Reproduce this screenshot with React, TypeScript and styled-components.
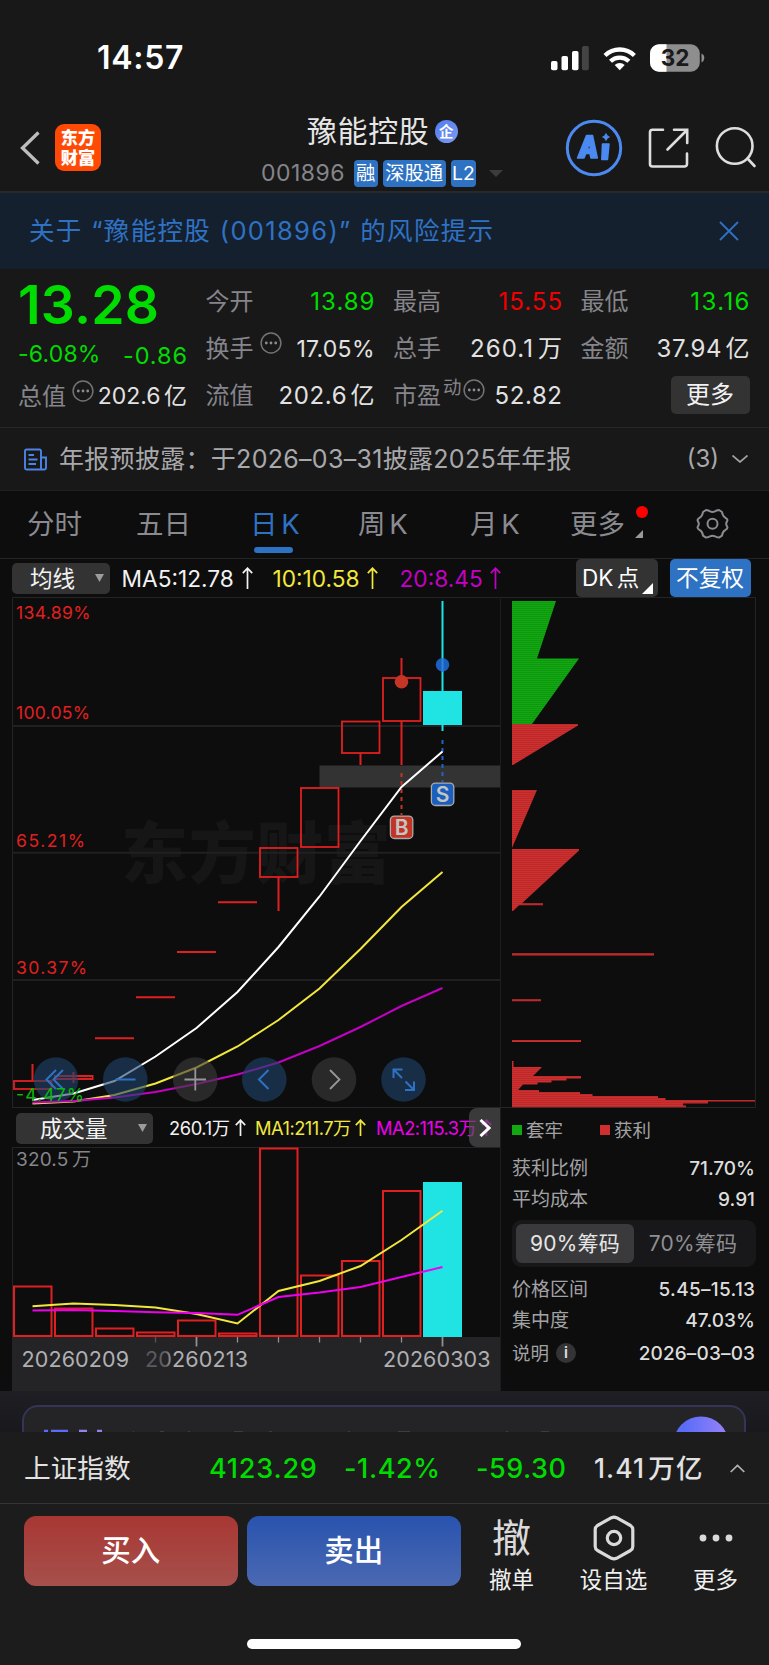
import React from "react";
import styled, { createGlobalStyle, css } from "styled-components";

const GREEN = "#00dc00";
const RED = "#e02020";
const BLUE = "#2e72c3";
const LINE = "#242426";

const Global = createGlobalStyle`
  * { box-sizing: border-box; }
  body {
    margin: 0;
    background: #0d0d0d;
    font-family: Inter, "Noto Sans CJK SC", sans-serif;
    font-size: 24px;
    color: #e2e2e2;
    -webkit-font-smoothing: antialiased;
  }
  svg { display: block; flex: none; }
  svg text { font-family: Inter, "Noto Sans CJK SC", sans-serif; }
`;

const Page = styled.div`
  width: 769px;
  height: 1665px;
  overflow: hidden;
  display: flex;
  flex-direction: column;
  white-space: nowrap;
  & > * { flex: none; }
`;

type TxtProps = { $size?: number; $color?: string; $weight?: number; $ls?: number; $ml?: number; $dy?: number; $ws?: number };
const Txt = styled.span<TxtProps>`
  flex: none;
  line-height: 1;
  font-size: ${(p) => p.$size ?? 24}px;
  color: ${(p) => p.$color ?? "inherit"};
  font-weight: ${(p) => p.$weight ?? 400};
  letter-spacing: ${(p) => p.$ls ?? 0}px;
  word-spacing: ${(p) => p.$ws ?? 0}px;
  margin-left: ${(p) => p.$ml ?? 0}px;
  margin-right: ${(p) => -(p.$ls ?? 0)}px;
  ${(p) => p.$dy && css`transform: translateY(${p.$dy}px);`}
`;

/* ---------- status bar ---------- */
const StatusBar = styled.div`
  height: 105px;
  background: #181818;
  display: flex;
  align-items: center;
  padding: 10px 64px 0 97px;
`;
const StatusIcons = styled.div`
  margin-left: auto;
  display: flex;
  align-items: center;
`;

/* ---------- header ---------- */
const Header = styled.header`
  height: 88px;
  background: #181818;
  border-bottom: 2px solid #29292b;
  display: flex;
  padding-left: 20px;
`;
const Logo = styled.div`
  width: 46px;
  height: 47px;
  margin: 19px 0 0 14px;
  border-radius: 9px;
  background: #ff4a05;
  color: #fff;
  font: 900 17.2px/20px Inter, "Noto Sans CJK SC", sans-serif;
  text-align: center;
  padding-top: 3.5px;
`;
const TitleBlock = styled.div`
  width: 260px;
  margin-left: 160px;
  padding-top: 9px;
`;
const TitleRow = styled.div`
  height: 34px;
  display: flex;
  align-items: center;
  padding-left: 46px;
`;
const CodeRow = styled.div`
  height: 28px;
  margin-top: 11px;
  display: flex;
  align-items: center;
`;
const Verified = styled.span`
  width: 23px;
  height: 23px;
  margin-left: 6px;
  border-radius: 50%;
  background: linear-gradient(135deg, #4f7cf0, #7d9bf2);
  color: #fff;
  font: 700 14.5px/22px "Noto Sans CJK SC", sans-serif;
  text-align: center;
`;
const Tag = styled.span<{ $w: number; $ml: number }>`
  width: ${(p) => p.$w}px;
  height: 27px;
  margin-left: ${(p) => p.$ml}px;
  border-radius: 4px;
  background: ${BLUE};
  color: #fff;
  font-size: 19.3px;
  line-height: 27px;
  text-align: center;
`;

const Banner = styled.div`
  height: 76px;
  background: #15202f;
  color: #2f72c4;
  display: flex;
  align-items: center;
  padding: 0 30px 0 29px;
  & > svg { margin-left: auto; }
`;

/* ---------- quote ---------- */
const Quote = styled.section`
  height: 159px;
  background: #181818;
  border-bottom: 1px solid #272728;
  display: grid;
  grid-template-columns: repeat(4, 169px);
  column-gap: 18.5px;
  padding: 9px 0 0 18px;
`;
const QuoteCol = styled.div`
  display: flex;
  flex-direction: column;
`;
const Cell = styled.div<{ $h?: number }>`
  height: ${(p) => p.$h ?? 47}px;
  display: flex;
  align-items: center;
  & > :last-child { margin-left: auto; }
`;
const MoreButton = styled.span`
  width: 79px;
  height: 38px;
  border-radius: 5px;
  background: #333334;
  color: #f2f2f2;
  font-size: 24px;
  line-height: 37px;
  text-align: center;
`;

const Notice = styled.div`
  height: 63px;
  background: #181818;
  border-bottom: 1px solid #202022;
  color: #a9a9ac;
  display: flex;
  align-items: center;
  padding: 0 21px 0 24px;
  & > svg:last-child { margin-left: 13px; }
`;

/* ---------- tabs ---------- */
const Tabs = styled.nav`
  height: 68px;
  border-bottom: 1px solid ${LINE};
  display: flex;
  align-items: center;
  padding-left: 27px;
`;
const Tab = styled.div<{ $w: number; $active?: boolean }>`
  width: ${(p) => p.$w}px;
  height: 67px;
  position: relative;
  color: ${(p) => (p.$active ? BLUE : "#8a8a90")};
  font-size: 27.5px;
  line-height: 66px;
  word-spacing: -4px;
`;
const Underline = styled.i`
  position: absolute;
  left: 4px;
  bottom: 5px;
  width: 39px;
  height: 6px;
  border-radius: 3px;
  background: ${BLUE};
`;
const Dot = styled.i`
  position: absolute;
  left: 66px;
  top: 15px;
  width: 12px;
  height: 12px;
  border-radius: 50%;
  background: #ff0000;
`;
const Corner = styled.i<{ $size: number; $color: string; $right: number; $bottom: number }>`
  position: absolute;
  right: ${(p) => p.$right}px;
  bottom: ${(p) => p.$bottom}px;
  border-left: ${(p) => p.$size}px solid transparent;
  border-bottom: ${(p) => p.$size}px solid ${(p) => p.$color};
`;

/* ---------- average row ---------- */
const AverageRow = styled.div`
  height: 38px;
  display: flex;
  align-items: center;
  padding-left: 12px;
`;
const Select = styled.div<{ $w: number; $pad: number }>`
  flex: none;
  width: ${(p) => p.$w}px;
  height: 31px;
  border-radius: 5px;
  background: #333334;
  color: #f2f2f2;
  display: flex;
  align-items: center;
  padding: 0 6px 0 ${(p) => p.$pad}px;
  & > svg { margin-left: auto; }
`;
const Reading = styled.div<{ $w: number; $color: string }>`
  flex: none;
  width: ${(p) => p.$w}px;
  color: ${(p) => p.$color};
  display: flex;
  align-items: center;
`;
const Chip = styled.div<{ $w: number; $bg: string; $ml: number }>`
  flex: none;
  position: relative;
  width: ${(p) => p.$w}px;
  height: 38px;
  margin-left: ${(p) => p.$ml}px;
  border-radius: 5px;
  background: ${(p) => p.$bg};
  color: #fff;
  display: flex;
  align-items: center;
  padding: 1px 0 0 6px;
`;

/* ---------- charts ---------- */
const Charts = styled.section`
  display: flex;
  height: 794px;
`;
const LeftPane = styled.div`
  width: 500px;
`;
const VolumeHeader = styled.div`
  height: 39px;
  position: relative;
  display: flex;
  align-items: center;
  padding: 1px 0 0 16px;
  overflow: hidden;
`;
const NextButton = styled.div`
  position: absolute;
  right: 0;
  top: 0;
  width: 31px;
  height: 39px;
  border-radius: 8px 0 0 8px;
  background: rgba(82, 82, 83, 0.66);
  display: flex;
  align-items: center;
  justify-content: center;
`;
const RightPane = styled.div`
  width: 269px;
  border-left: 1px solid #1d1d1f;
  display: flex;
  flex-direction: column;
`;
const Legend = styled.div`
  height: 44px;
  display: flex;
  align-items: center;
  padding-left: 11px;
  color: #a2a2a5;
`;
const Swatch = styled.i<{ $c: string; $ml?: number }>`
  width: 10px;
  height: 10px;
  margin-left: ${(p) => p.$ml ?? 0}px;
  background: ${(p) => p.$c};
`;
const StatRow = styled.div<{ $h?: number }>`
  height: ${(p) => p.$h ?? 31}px;
  width: 243px;
  margin-left: 11px;
  padding-top: 1.5px;
  display: flex;
  align-items: center;
  color: #a2a2a5;
  & > :last-child { margin-left: auto; color: #dedede; }
`;
const Segmented = styled.div`
  width: 244px;
  height: 47px;
  margin: 6px 0 6px 11px;
  border-radius: 9px;
  background: #18181a;
  display: flex;
  padding: 4px;
`;
const Segment = styled.div<{ $on?: boolean }>`
  width: 118px;
  height: 39px;
  border-radius: 6px;
  background: ${(p) => (p.$on ? "#3a3a3c" : "transparent")};
  color: ${(p) => (p.$on ? "#e6e6e6" : "#8f8f93")};
  font-size: 21px;
  letter-spacing: 0.2px;
  line-height: 40px;
  text-align: center;
`;
const InfoDot = styled.span`
  width: 20px;
  height: 20px;
  margin-left: 7px;
  border-radius: 50%;
  background: #343436;
  color: #e0e0e0;
  font-size: 15px;
  font-weight: 600;
  line-height: 20px;
  text-align: center;
`;

/* ---------- bottom ---------- */
const CardStrip = styled.div`
  height: 41px;
  overflow: hidden;
  padding: 14px 23px 0 22px;
  background: linear-gradient(#1f1f23, #18181d);
`;
const Card = styled.div`
  height: 60px;
  border: 2px solid #34345a;
  border-radius: 16px;
  background: #242427;
`;
const IndexBar = styled.div`
  height: 72px;
  background: #1c1c1c;
  border-bottom: 1px solid #353536;
  display: flex;
  align-items: center;
  padding: 1px 0 0 24px;
`;
const IndexCell = styled.span<{ $w: number }>`
  width: ${(p) => p.$w}px;
  flex: none;
  display: flex;
`;
const ActionBar = styled.div`
  height: 120px;
  background: #1c1c1c;
  display: flex;
  padding: 11.5px 0 0 23.5px;
`;
const TradeButton = styled.button<{ $from: string; $to: string }>`
  width: 214.5px;
  height: 70px;
  margin: 0 8.5px 0 0;
  padding: 1px 0 0;
  border: 0;
  border-radius: 12px;
  background: linear-gradient(${(p) => p.$from}, ${(p) => p.$to});
  color: #fff;
  font: 500 29.5px/1 Inter, "Noto Sans CJK SC", sans-serif;
`;
const Action = styled.div<{ $w: number; $ml: number }>`
  width: ${(p) => p.$w}px;
  margin-left: ${(p) => p.$ml}px;
  display: flex;
  flex-direction: column;
  align-items: center;
  color: #f0f0f0;
`;
const ActionIcon = styled.div`
  height: 45px;
  margin-bottom: 8px;
  display: flex;
  align-items: center;
  color: #dadada;
`;
const HomeArea = styled.div`
  height: 42px;
  background: #1c1c1c;
  padding: 15px 0 0 247px;
`;
const HomeIndicator = styled.div`
  width: 274px;
  height: 10px;
  border-radius: 5px;
  background: #fff;
`;

const More = ({ ml = 0 }: { ml?: number }) => (
  <svg width="22" height="22" viewBox="0 0 22 22" style={{ marginLeft: ml, marginTop: -11 }}>
    <circle cx="11" cy="11" r="9.9" fill="none" stroke="#737377" strokeWidth="1.5" />
    {[6.3, 11, 15.7].map((x) => <circle key={x} cx={x} cy="11" r="1.4" fill="#8d8d91" />)}
  </svg>
);
const Caret = () => (
  <svg width="9" height="8"><path d="M0 0h9l-4.5 8z" fill="#9b9ba0" /></svg>
);
const Up = ({ h, ml = 7 }: { h: number; ml?: number }) => (
  <svg width="11" height={h} style={{ marginLeft: ml }} fill="none" stroke="currentColor" strokeWidth="1.7">
    <path d={`M5.500 1V${h}M.8 6.200L5.500 1.200 10.200 6.200`} />
  </svg>
);

/* ---------- chart data ---------- */
const X = (i: number) => 32.5 + i * 41;
const curve = (ys: number[]) => ys.map((y, i) => `${X(i)},${y}`).join(" ");

const ma5 = [1100, 1093.5, 1081, 1056.5, 1028, 992, 947, 896.5, 841, 787, 751.5];
const ma10 = [1103.5, 1101.5, 1095, 1083.5, 1067.5, 1046.5, 1020, 988.5, 949, 907, 872];
const ma20 = [1102.5, 1101, 1097.5, 1092, 1084, 1074.5, 1062.5, 1046, 1027, 1006, 988];
const flats: [number, number][] = [[2, 1038.3], [3, 997.3], [4, 952], [5, 902.3]];
const bodies: [number, number, number][] = [
  [0, 1081, 1089], [1, 1076, 1079], [6, 848, 877], [7, 788, 847], [8, 721.5, 753], [9, 678, 721],
];
const wicks: [number, number, number][] = [
  [0, 1064, 1080], [1, 1072, 1083], [6, 877, 911], [8, 753, 765], [9, 658, 678], [9, 721, 765],
];
const grid: [string, number, number][] = [["100.05%", 726, 718.7], ["65.21%", 852.7, 846.7], ["30.37%", 980, 973.7]];
const labelWidth: Record<string, number> = { "100.05%": 74, "65.21%": 69, "30.37%": 71 };

const KLine = () => (
  <svg width="500" height="511" viewBox="0 597 500 511">
    <text x="121" y="878" fontSize="67" fontWeight="900" fill="#161617" textLength="270">东方财富</text>
    <path d="M12.5 1108V597.5H500M12 1107.5h488" fill="none" stroke={LINE} />
    {grid.map(([t, y, b]) => (
      <g key={t}>
        <path d={`M12 ${y}h488`} stroke="#202022" strokeWidth="2" />
        <text x="16" y={b} fontSize="17.6" fill={RED} textLength={labelWidth[t]}>{t}</text>
      </g>
    ))}
    <text x="16" y="618.5" fontSize="17.6" fill={RED} textLength="74.5">134.89%</text>
    <rect x="319.5" y="765.5" width="180.5" height="22" fill="#333334" />
    <g stroke={RED} strokeWidth="2" fill="none">
      {bodies.map(([i, t, b]) => <rect key={i} x={X(i) - 18.5} y={t} width="37.5" height={b - t} strokeWidth={i === 1 ? 2 : 1.8} />)}
      {wicks.map(([i, t, b]) => <path key={i + "-" + t} d={`M${X(i)} ${t}V${b}`} />)}
      {flats.map(([i, y]) => <path key={i} d={`M${X(i) - 19.5} ${y}h39`} />)}
    </g>
    <path d="M442.5 601V731" stroke="#20e3e3" strokeWidth="2" />
    <rect x="423" y="691" width="39" height="34" fill="#20e3e3" />
    <path d="M401.5 773V815" stroke="#c53526" strokeWidth="2" strokeDasharray="4 4" />
    <path d="M442.5 740V782" stroke="#2263c0" strokeWidth="2" strokeDasharray="4 4" />
    <g fill="none" strokeWidth="2">
      <polyline points={curve(ma5)} stroke="#fff" />
      <polyline points={curve(ma10)} stroke="#f2e83c" />
      <polyline points={curve(ma20)} stroke="#c400c4" />
    </g>
    <circle cx="401.5" cy="681.8" r="6.8" fill="#c53526" />
    <circle cx="442.5" cy="664.8" r="6.8" fill="#1b60bf" />
    <path d="M442.5 658v14" stroke="#2b86dd" strokeWidth="2" />
    {([["B", 401.6, 827.3, "#c23424"], ["S", 442.6, 794.3, "#1b5fbe"]] as [string, number, number, string][]).map(([t, x, y, c]) => (
      <g key={t}>
        <rect x={x - 11.2} y={y - 11.2} width="22.4" height="22.4" rx="4" fill={c} stroke="#aaa" strokeWidth="1.3" />
        <text x={x} y={y + 7.6} fontSize="21" fontWeight="600" fill="#c4c4c4" textAnchor="middle">{t}</text>
      </g>
    ))}
    {[56, 125.3, 195.3, 264.3, 334, 403.5].map((x, i) => (
      <circle key={x} cx={x} cy="1079.5" r="22.3" fill={i === 2 || i === 4 ? "rgba(60,60,61,.62)" : "rgba(31,68,109,.6)"} />
    ))}
    <g fill="none" stroke={BLUE} strokeWidth="2">
      <path d="M56 1070l-9.5 9.5 9.5 9.5M63 1070l-9.5 9.5 9.5 9.5M115.5 1079.5h20M268.5 1070l-9.5 9.5 9.5 9.5" />
      <path d="M402 1078l-8-8M393.5 1078v-8.5h9M405.5 1081.5l8 8M414 1081.5v8.5h-9" />
    </g>
    <path d="M184.5 1079.5h21.5M195.3 1068.5v22M330 1070l9.5 9.5-9.5 9.5" fill="none" stroke="#97979a" strokeWidth="1.8" />
    <text x="16" y="1100.8" fontSize="17.6" fill="#0bb80b" textLength="68">-4.47%</text>
  </svg>
);

const volumes = [1286.5, 1308.5, 1328.5, 1332.5, 1320.5, 1333.5, 1148.5, 1275.5, 1261, 1191];
const volFast = [1306.2, 1303.5, 1305, 1307.5, 1314, 1323.5, 1291, 1281, 1266, 1240, 1210.7];
const volSlow = [1310.5, 1310, 1311, 1312.3, 1313, 1314.8, 1297, 1292.5, 1287, 1277, 1267];

const Volume = () => (
  <svg width="500" height="244" viewBox="0 1147 500 244">
    <path d="M12.5 1337V1147.5H500" fill="none" stroke={LINE} />
    <rect x="12" y="1337" width="488" height="54" fill="#242427" />
    <text x="16" y="1166" fontSize="19" fill="#85858b" wordSpacing="-2" textLength="75">320.5 万</text>
    {volumes.map((y, i) => (
      <rect key={i} x={X(i) - 18.5} y={y} width="37.5" height={1336 - y} fill="none" stroke={RED} strokeWidth="2" />
    ))}
    <rect x="423" y="1182" width="39" height="155" fill="#20e3e3" />
    <g fill="none" strokeWidth="2">
      <polyline points={curve(volFast)} stroke="#f2e83c" />
      <polyline points={curve(volSlow)} stroke="#ee00ee" />
    </g>
    {[3, 4, 5, 6, 7, 8, 9, 10].map((i) => (
      <path key={i} d={`M${X(i)} 1337v${i === 4 || i === 10 ? 9.5 : 5.5}`} stroke={i === 3 ? "#555" : "#909093"} strokeWidth={i === 4 || i === 10 ? 1.8 : 1.3} />
    ))}
    <defs>
      <linearGradient id="fade">
        <stop offset="0" stopColor="#55555a" />
        <stop offset=".2" stopColor="#626265" />
        <stop offset=".28" stopColor="#b0b0b3" />
      </linearGradient>
    </defs>
    <g fontSize="21.5" fill="#b0b0b3">
      <text x="21.5" y="1367.3" textLength="107.5">20260209</text>
      <text x="145" y="1367.3" textLength="103" fill="url(#fade)">20260213</text>
      <text x="383" y="1367.3" textLength="107.5">20260303</text>
    </g>
  </svg>
);

const Chips = () => (
  <svg width="268" height="511" viewBox="501 597 268 511">
    <defs>
      <pattern id="stripe" width="4" height="2" patternUnits="userSpaceOnUse">
        <rect width="4" height="1" fill="rgba(0,0,0,.1)" />
      </pattern>
    </defs>
    <path d="M501 597.5H755.5V1107.5H501" fill="none" stroke={LINE} />
    {["#12a812", "url(#stripe)"].map((f) => (
      <path key={f} fill={f} d="M512 601H556L537 658.5H579L532 724H512z" />
    ))}
    {["#cf2f2f", "url(#stripe)"].map((f) => (
      <path
        key={f}
        fill={f}
        d="M512 724H578V725.5L513 765H512zM512 790H537L512 848zM512 849H579V850.5L522 903.3H543V905.3H519L513 911H512zM512 953.3H654V955.5H512zM512 999.3H541V1001.3H512zM512 1040H581V1042H512zM512 1061H513.5V1067H542L533 1076H581V1078.5H566.5V1080.5H551.5V1082.5H537.5V1084.5H523L518.5 1089.5V1090H539V1092H580V1094H592.5V1096H658V1098H665.5V1100H755V1101.5H708V1103.5H683V1105.5H686V1107.3H512z"
      />
    ))}
  </svg>
);

export default function App() {
  return (
    <>
      <Global />
      <Page>
        <StatusBar>
          <Txt $size={32} $weight={600} $color="#fff" $ls={0.7}>14:57</Txt>
          <StatusIcons>
            <svg width="154" height="30" viewBox="551 42 154 30">
              <g fill="#fff">
                <rect x="551" y="60" width="6.5" height="9.3" rx="1.8" />
                <rect x="561.5" y="55" width="6.5" height="14.3" rx="1.8" />
                <rect x="572" y="50" width="6.5" height="19.3" rx="1.8" />
                <rect x="582" y="45" width="6.8" height="24.3" rx="1.8" fill="#444445" />
                <path d="M619.7 69.2l-5-5.2a7.5 7.5 0 0 1 10 0z" />
              </g>
              <g fill="none" stroke="#fff" strokeWidth="4.3">
                <path d="M605 54.5a21 21 0 0 1 29.4 0" />
                <path d="M610.5 60.3a13.3 13.3 0 0 1 18.4 0" />
              </g>
              <clipPath id="batt"><rect x="650" y="43.3" width="49.8" height="27.4" rx="9" /></clipPath>
              <g clipPath="url(#batt)">
                <rect x="650" y="43" width="50" height="28" fill="#8e8e8e" />
                <rect x="650" y="43" width="16.5" height="28" fill="#fff" />
              </g>
              <path d="M701.5 52.5q2.8 1.3 2.8 4.5t-2.8 4.5z" fill="#8e8e8e" />
              <text x="675" y="65.3" fontSize="22.5" fontWeight="700" fill="#1b1b1b" textAnchor="middle">32</text>
            </svg>
          </StatusIcons>
        </StatusBar>

        <Header>
          <svg width="21" height="86" viewBox="20 105 21 86">
            <path d="M38.5 132.5L22.5 148l16 15.5" fill="none" stroke="#bdbdbd" strokeWidth="3.3" />
          </svg>
          <Logo>东方<br />财富</Logo>
          <TitleBlock>
            <TitleRow>
              <Txt $size={30} $ls={0.6} $color="#e6e6e6">豫能控股</Txt>
              <Verified>企</Verified>
            </TitleRow>
            <CodeRow>
              <Txt $size={23} $color="#85858b" $ls={0.5}>001896</Txt>
              <Tag $w={24} $ml={9}>融</Tag>
              <Tag $w={63} $ml={5}>深股通</Tag>
              <Tag $w={25.5} $ml={5}>L2</Tag>
              <svg width="14" height="7" style={{ marginLeft: 13 }}><path d="M0 0h14L7 7z" fill="#3c3c3e" /></svg>
            </CodeRow>
          </TitleBlock>
          <svg width="206" height="86" viewBox="563 105 206 86" style={{ marginLeft: "auto" }}>
            <circle cx="594" cy="148" r="26.7" fill="none" stroke="#4b8af0" strokeWidth="3" />
            <g fill="#4b8af0" stroke="#4b8af0" strokeLinejoin="round" strokeWidth="1.5">
              <path fillRule="evenodd" d="M586.5 135.5h6l4.8 22.5h-6.300l-1-4.500h-4.200l-1.800 4.500h-6.500zM589.500 143l-2.200 6h3.200z" />
              <path d="M602.5 144h6.5l-1.5 15.5h-5.7z" />
              <path d="M606 133.5q1 2.800 3.5 3.500-2.500.700-3.500 3.500-1-2.800-3.500-3.500 2.500-.700 3.500-3.500z" strokeWidth=".8" />
            </g>
            <g fill="none" stroke="#dedede" strokeWidth="2.6" strokeLinecap="round">
              <path d="M663 129.8h-10.5a2.5 2.5 0 0 0-2.5 2.5V164a2.5 2.5 0 0 0 2.5 2.5H684.5a2.5 2.5 0 0 0 2.5-2.5V153.5M674 129.8h13.2V143M687 130L667.5 149.5" />
              <circle cx="734.7" cy="146" r="17.8" />
              <path d="M747.5 158.5L754.5 166" />
            </g>
          </svg>
        </Header>

        <Banner>
          <Txt $size={25.5} $ls={1.35}>关于 “豫能控股 (001896)” 的风险提示</Txt>
          <svg width="20" height="20"><path d="M1 1l18 18M19 1L1 19" stroke="#2f72c4" strokeWidth="1.8" /></svg>
        </Banner>

        <Quote>
          <QuoteCol>
            <Cell $h={54}><Txt $size={53.5} $weight={600} $ls={0.2} $color={GREEN}>13.28</Txt><i /></Cell>
            <Cell $h={43}>
              <Txt $size={23} $color={GREEN} $dy={1} $ls={0.2}>-6.08%</Txt>
              <Txt $size={23.5} $color={GREEN} $dy={2} $ls={0.9}>-0.86</Txt>
            </Cell>
            <Cell $h={43}>
              <Txt $color="#85858b">总值</Txt><More ml={6} />
              <Txt $size={23} $ws={-3}>202.6 亿</Txt>
            </Cell>
          </QuoteCol>
          <QuoteCol>
            <Cell><Txt $color="#85858b">今开</Txt><Txt $color={GREEN} $ls={1}>13.89</Txt></Cell>
            <Cell><Txt $color="#85858b">换手</Txt><More ml={6} /><Txt $size={23} $ls={0.3} $dy={1}>17.05%</Txt></Cell>
            <Cell><Txt $color="#85858b">流值</Txt><Txt $ls={0.6} $ws={-4}>202.6 亿</Txt></Cell>
          </QuoteCol>
          <QuoteCol>
            <Cell><Txt $color="#85858b">最高</Txt><Txt $color="#f00000" $ls={1}>15.55</Txt></Cell>
            <Cell><Txt $color="#85858b">总手</Txt><Txt $ls={1.1} $ws={-4}>260.1 万</Txt></Cell>
            <Cell>
              <Txt $color="#85858b">市盈</Txt>
              <Txt $size={18.5} $color="#85858b" $ml={2} $dy={-8}>动</Txt><More ml={1} />
              <Txt $ls={0.6}>52.82</Txt>
            </Cell>
          </QuoteCol>
          <QuoteCol>
            <Cell><Txt $color="#85858b">最低</Txt><Txt $color={GREEN} $ls={1.4}>13.16</Txt></Cell>
            <Cell><Txt $color="#85858b">金额</Txt><Txt $ls={0.6} $ws={-4}>37.94 亿</Txt></Cell>
            <Cell $h={45}><MoreButton>更多</MoreButton></Cell>
          </QuoteCol>
        </Quote>

        <Notice>
          <svg width="23" height="23" fill="none" stroke="#4b83e6" strokeWidth="1.9">
            <path d="M17 21V3a1.5 1.5 0 0 0-1.5-1.5h-13A1.5 1.5 0 0 0 1 3v17a1.5 1.5 0 0 0 1.5 1.5H20.5a1.5 1.5 0 0 0 1.5-1.5V9.5H17M4.5 7h5.500M4.500 11.500h9M4.500 16h7.500" />
          </svg>
          <Txt $size={25} $ml={12} $ls={0.3}>年报预披露：于2026–03–31披露2025年年报</Txt>
          <Txt $size={24} style={{ marginLeft: "auto" }}>(3)</Txt>
          <svg width="16" height="8"><path d="M.5.5L8 7 15.5.5" fill="none" stroke="#a0a0a3" strokeWidth="1.7" /></svg>
        </Notice>

        <Tabs>
          <Tab $w={109}>分时</Tab>
          <Tab $w={114}>五日</Tab>
          <Tab $w={108} $active>日 K<Underline /></Tab>
          <Tab $w={112}>周 K</Tab>
          <Tab $w={100}>月 K</Tab>
          <Tab $w={126}>更多<Dot /><Corner $size={8} $color="#98989d" $right={53} $bottom={20} /></Tab>
          <svg width="33" height="33" viewBox="-16.5 -15.8 33 33" fill="none" stroke="#8a8a90" strokeWidth="2">
            <path strokeLinejoin="round" d="M-6.5-13.8Q-3.8-13.5-2.5-12.5Q0-11.3 2.5-12.5Q3.8-13.5 6.5-13.8L9.5-11.8Q10-7.5 13-6Q15.5-4.5 14.8-3Q12.5 0 14.8 3Q15.5 4.5 13 6Q10 7.5 9.5 11.8L6.5 13.8Q3.8 13.5 2.5 12.5Q0 11.3-2.5 12.5Q-3.8 13.5-6.5 13.8L-9.5 11.8Q-10 7.5-13 6Q-15.5 4.5-14.8 3Q-12.5 0-14.8-3Q-15.5-4.5-13-6Q-10-7.5-9.5-11.8z" />
            <circle r="5" />
          </svg>
        </Tabs>

        <AverageRow>
          <Select $w={97.5} $pad={18}><Txt $size={22.5} $dy={0.5}>均线</Txt><Caret /></Select>
          <Reading $w={163} $color="#f2f2f2"><Txt $size={22.7} $ml={12} $dy={1}>MA5:12.78</Txt><Up h={22} ml={8} /></Reading>
          <Reading $w={127} $color="#f2e83c"><Txt $size={22.7} $dy={1}>10:10.58</Txt><Up h={22} /></Reading>
          <Reading $w={176.5} $color="#c400c4"><Txt $size={22.7} $dy={1}>20:8.45</Txt><Up h={22} /></Reading>
          <Chip $w={81.5} $bg="#333334" $ml={0}>
            <Txt $size={22.5} $ws={-3}>DK 点</Txt>
            <Corner $size={11.5} $color="#fff" $right={5} $bottom={3.5} />
          </Chip>
          <Chip $w={81} $bg={BLUE} $ml={12.5}><Txt $size={22.7}>不复权</Txt></Chip>
        </AverageRow>

        <Charts>
          <LeftPane>
            <KLine />
            <VolumeHeader>
              <Select $w={137} $pad={24}><Txt $size={22.5} $dy={0.5}>成交量</Txt><Caret /></Select>
              <Reading $w={102} $color="#f2f2f2"><Txt $size={18.3} $ml={16} $ls={-0.4}>260.1万</Txt><Up h={17} ml={5} /></Reading>
              <Reading $w={121} $color="#f2e83c"><Txt $size={18.3} $ls={-0.5}>MA1:211.7万</Txt><Up h={17} ml={4} /></Reading>
              <Reading $w={130} $color="#ee00ee"><Txt $size={18.3} $ls={-0.5}>MA2:115.3万</Txt><Up h={17} ml={4} /></Reading>
              <NextButton>
                <svg width="12" height="18"><path d="M1.5 1L10 9l-8.500 8" fill="none" stroke="#fff" strokeWidth="3" /></svg>
              </NextButton>
            </VolumeHeader>
            <Volume />
          </LeftPane>
          <RightPane>
            <Chips />
            <Legend>
              <Swatch $c="#12a812" /><Txt $size={18.5} $ml={4}>套牢</Txt>
              <Swatch $c="#cf2f2f" $ml={37} /><Txt $size={18.5} $ml={4}>获利</Txt>
            </Legend>
            <StatRow><Txt $size={19}>获利比例</Txt><Txt $size={19} $weight={500}>71.70%</Txt></StatRow>
            <StatRow><Txt $size={19}>平均成本</Txt><Txt $size={19} $weight={500}>9.91</Txt></StatRow>
            <Segmented><Segment $on>90%筹码</Segment><Segment>70%筹码</Segment></Segmented>
            <StatRow><Txt $size={19}>价格区间</Txt><Txt $size={19} $weight={500} $ls={0.3}>5.45–15.13</Txt></StatRow>
            <StatRow><Txt $size={19}>集中度</Txt><Txt $size={19} $weight={500} $ls={0.1}>47.03%</Txt></StatRow>
            <StatRow $h={35}><Txt $size={18.5}>说明</Txt><InfoDot>i</InfoDot><Txt $size={19} $weight={500} $ls={0.15}>2026–03–03</Txt></StatRow>
          </RightPane>
        </Charts>

        <CardStrip>
          <Card>
            <svg width="720" height="25" viewBox="24 1407 720 25">
              <defs>
                <linearGradient id="orb"><stop offset=".2" stopColor="#5a6df8" /><stop offset="1" stopColor="#9a82f8" /></linearGradient>
              </defs>
              <circle cx="701" cy="1444" r="27.5" fill="url(#orb)" />
              <path d="M44 1431h4M51 1431h17" stroke="#5a6df8" strokeWidth="2.4" />
              <path d="M79 1431h8M97 1431h5" stroke="#8f84f0" strokeWidth="2.4" />
              <path d="M133 1431.5h1M160 1431.5h4M188 1431.5h2M234 1431.5h9M269 1431.5h3M348 1431.5h2M398 1431.5h12M506 1431.5h2M541 1431.5h8" stroke="#3c3c3e" />
            </svg>
          </Card>
        </CardStrip>

        <IndexBar>
          <IndexCell $w={185}><Txt $size={26.7}>上证指数</Txt></IndexCell>
          <IndexCell $w={135}><Txt $size={27} $weight={500} $ls={0.8} $color={GREEN}>4123.29</Txt></IndexCell>
          <IndexCell $w={132}><Txt $size={27} $weight={500} $ls={0.6} $color={GREEN}>-1.42%</Txt></IndexCell>
          <IndexCell $w={118}><Txt $size={27} $weight={500} $ls={0.5} $color={GREEN}>-59.30</Txt></IndexCell>
          <IndexCell $w={136}><Txt $size={26.5} $weight={500} $ls={1.1} $ws={-5}>1.41 万亿</Txt></IndexCell>
          <svg width="15" height="9"><path d="M.7 8L7.5 1.5 14.3 8" fill="none" stroke="#b5b5b5" strokeWidth="1.7" /></svg>
        </IndexBar>

        <ActionBar>
          <TradeButton $from="#a83733" $to="#a6504c">买入</TradeButton>
          <TradeButton $from="#2853ae" $to="#4b69b2">卖出</TradeButton>
          <Action $w={50} $ml={17}>
            <ActionIcon><Txt $size={39} $dy={-1}>撤</Txt></ActionIcon><Txt $size={22.5}>撤单</Txt>
          </Action>
          <Action $w={70} $ml={42}>
            <ActionIcon>
              <svg width="42" height="46" viewBox="-21 -23 42 46" fill="none" stroke="#dadada" strokeWidth="3.2">
                <path strokeLinejoin="round" d="M-2.5-20.3Q0-21.5 2.5-20.3L16.5-12.5Q18.8-11 18.8-8.5V8.5Q18.8 11 16.5 12.5L2.5 20.3Q0 21.5-2.5 20.3L-16.5 12.5Q-18.8 11-18.8 8.5V-8.5Q-18.8-11-16.5-12.5z" />
                <circle r="6.7" />
              </svg>
            </ActionIcon>
            <Txt $size={22.5}>设自选</Txt>
          </Action>
          <Action $w={50} $ml={42}>
            <ActionIcon>
              <svg width="34" height="8" fill="#dadada"><circle cx="4" cy="4" r="3.4" /><circle cx="17" cy="4" r="3.4" /><circle cx="30" cy="4" r="3.4" /></svg>
            </ActionIcon>
            <Txt $size={22.5}>更多</Txt>
          </Action>
        </ActionBar>
        <HomeArea><HomeIndicator /></HomeArea>
      </Page>
    </>
  );
}
